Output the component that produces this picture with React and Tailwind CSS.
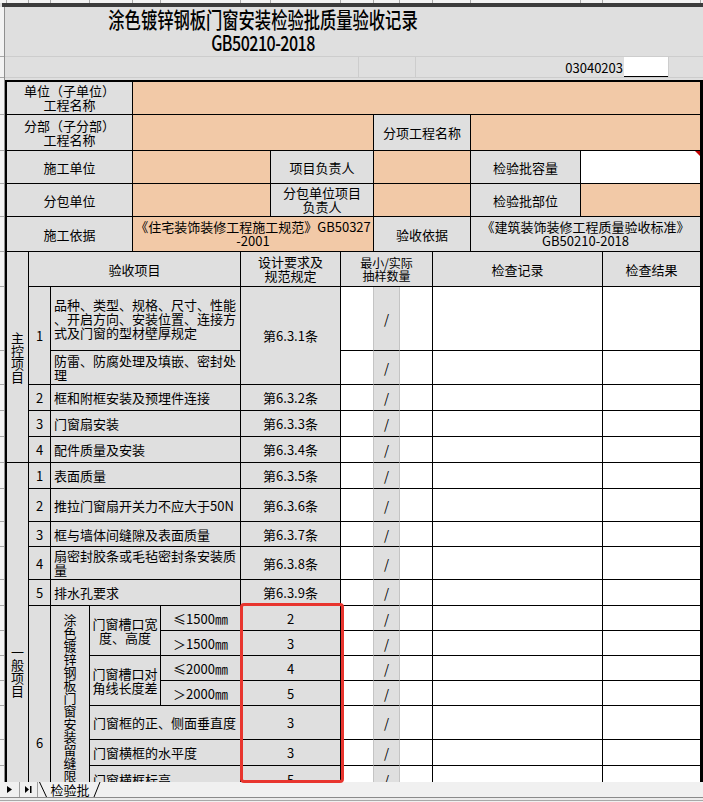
import React from 'react';

// fills used by the sheet cells
const BG = { g: 'bg-[#dfdfdf]', p: 'bg-[#f2c9a7]', w: 'bg-white' };

const H = {
  21: 'h-[21px]', 25: 'h-[25px]', 26: 'h-[26px]', 28: 'h-[28px]', 29: 'h-[29px]',
  33: 'h-[33px]', 34: 'h-[34px]', 35: 'h-[35px]', 36: 'h-[36px]', 37: 'h-[37px]',
  50: 'h-[50px]', 64: 'h-[64px]',
};

const COLS = [
  'w-[22px]', 'w-[22px]', 'w-[39px]', 'w-[43px]', 'w-[28px]', 'w-[80px]', 'w-[30px]', 'w-[70px]',
  'w-[33px]', 'w-[26px]', 'w-[33px]', 'w-[38px]', 'w-[110px]', 'w-[22px]', 'w-[98px]',
];

const cell = (t, cs = 1, rs = 1, bg = 'g', o = {}) => ({ t, cs, rs, bg, ...o });

const tail = () => [
  cell('', 1, 1, 'w', { light: true }),
  cell('/', 1, 1, 'g', { light: true }),
  cell('', 1, 1, 'w'),
  cell('', 3, 1, 'w'),
  cell('', 1, 1, 'w'),
];

const L = { left: true };

const rows = [
  [33, [cell(['单位（子单位）', '工程名称'], 4), cell('', 11, 1, 'p')]],
  [36, [cell(['分部（子分部）', '工程名称'], 4), cell('', 5, 1, 'p'), cell('分项工程名称', 3), cell('', 3, 1, 'p')]],
  [33, [cell('施工单位', 4), cell('', 3, 1, 'p'), cell('项目负责人', 2), cell('', 3, 1, 'p'), cell('检验批容量'), cell('', 2, 1, 'w', { mark: true })]],
  [33, [cell('分包单位', 4), cell('', 3, 1, 'p'), cell(['分包单位项目', '负责人'], 2), cell('', 3, 1, 'p'), cell('检验批部位'), cell('', 2, 1, 'p')]],
  [35, [cell('施工依据', 4), cell(['《住宅装饰装修工程施工规范》GB50327', '-2001'], 5, 1, 'p'), cell('验收依据', 3), cell(['《建筑装饰装修工程质量验收标准》', 'GB50210-2018'], 3)]],
  [35, [cell('主控项目', 1, 6, 'g', { vert: true }), cell('验收项目', 5), cell(['设计要求及', '规范规定'], 2), cell(['最小/实际', '抽样数量'], 3, 1, 'g', { sm: true }), cell('检查记录', 3), cell('检查结果')]],
  [64, [cell('1', 1, 2), cell(['品种、类型、规格、尺寸、性能', '、开启方向、安装位置、连接方', '式及门窗的型材壁厚规定'], 4, 1, 'g', L), cell('第6.3.1条', 2, 2), ...tail()]],
  [34, [cell(['防雷、防腐处理及填嵌、密封处', '理'], 4, 1, 'g', L), ...tail()]],
  [26, [cell('2'), cell('框和附框安装及预埋件连接', 4, 1, 'g', L), cell('第6.3.2条', 2), ...tail()]],
  [26, [cell('3'), cell('门窗扇安装', 4, 1, 'g', L), cell('第6.3.3条', 2), ...tail()]],
  [26, [cell('4'), cell('配件质量及安装', 4, 1, 'g', L), cell('第6.3.4条', 2), ...tail()]],
  [26, [cell('一般项目', 1, 15, 'g', { vert: true }), cell('1'), cell('表面质量', 4, 1, 'g', L), cell('第6.3.5条', 2), ...tail()]],
  [33, [cell('2'), cell('推拉门窗扇开关力不应大于50N', 4, 1, 'g', L), cell('第6.3.6条', 2), ...tail()]],
  [25, [cell('3'), cell('框与墙体间缝隙及表面质量', 4, 1, 'g', L), cell('第6.3.7条', 2), ...tail()]],
  [33, [cell('4'), cell(['扇密封胶条或毛毡密封条安装质', '量'], 4, 1, 'g', L), cell('第6.3.8条', 2), ...tail()]],
  [26, [cell('5'), cell('排水孔要求', 4, 1, 'g', L), cell('第6.3.9条', 2), ...tail()]],
  [25, [cell('6', 1, 10), cell('涂色镀锌钢板门窗安装留缝限值和允许偏差㎜', 1, 10, 'g', { vert: true }), cell(['门窗槽口宽', '度、高度'], 2, 2), cell('≤1500㎜'), cell('2', 2), ...tail()]],
  [25, [cell('＞1500㎜'), cell('3', 2), ...tail()]],
  [25, [cell(['门窗槽口对', '角线长度差'], 2, 2), cell('≤2000㎜'), cell('4', 2), ...tail()]],
  [25, [cell('＞2000㎜'), cell('5', 2), ...tail()]],
  [34, [cell('门窗框的正、侧面垂直度', 3, 1, 'g', L), cell('3', 2), ...tail()]],
  [26, [cell('门窗横框的水平度', 3, 1, 'g', L), cell('3', 2), ...tail()]],
  [28, [cell('门窗横框标高', 3, 1, 'g', L), cell('5', 2), ...tail()]],
  [28, [cell('门窗竖向偏离中心', 3, 1, 'g', L), cell('5', 2), ...tail()]],
  [29, [cell('双层门窗内外框间距', 3, 1, 'g', L), cell('4', 2), ...tail()]],
  [29, [cell('推拉门窗扇与框搭接宽度', 3, 1, 'g', L), cell('2', 2), ...tail()]],
];

const rowHeads = [50, 21, 37, 36, 33, 33, 35, 35, 64, 34, 26, 26, 26, 26, 33, 25, 33, 26, 25, 25, 25, 25, 34, 26, 28, 28, 29, 29];

function Cell({ c }) {
  const lines = Array.isArray(c.t) ? c.t : [c.t];
  const multi = lines.length > 1;
  return (
    <td
      colSpan={c.cs}
      rowSpan={c.rs}
      className={`p-0 border-r border-b border-b-black ${c.light ? 'border-r-[#c4c4c4]' : 'border-r-black'} ${BG[c.bg]} ${c.left ? 'text-left pl-[3px]' : 'text-center'} ${c.sm ? 'text-[12px] leading-[13px]' : multi ? 'text-[13px] leading-[14px]' : 'text-[13px] leading-[15px]'} ${c.mark ? 'relative' : ''}`}
    >
      {c.vert ? (
        <div className="mx-auto w-[13px] leading-[13px] break-all">{c.t}</div>
      ) : (
        lines.map((l, i) => (
          <div key={i} className="whitespace-nowrap">{l}</div>
        ))
      )}
      {c.mark && (
        <div className="absolute top-0 right-0 w-0 h-0 border-l-[5px] border-l-transparent border-t-[5px] border-t-[#c00000]" />
      )}
    </td>
  );
}

export default function App() {
  return (
    <div className="relative w-[703px] h-[802px] overflow-hidden flex flex-col bg-[#dfdfdf] text-black font-['Noto_Sans_CJK_SC','Noto_Sans',sans-serif]">
      {/* column header sliver */}
      <div className="flex h-[3px] bg-[#f3f3f3]">
        <div className="w-[7px] border-r border-[#a8a8a8]" />
        {COLS.map((w, i) => (
          <div key={i} className={`${w} border-r border-[#a8a8a8]`} />
        ))}
      </div>
      <div className="h-[4px] ml-[2px] bg-[#3c3c3c]" />

      <div className="flex h-[775px] overflow-hidden">
        {/* row header sliver */}
        <div className="w-[5px] shrink-0 flex flex-col bg-[#f3f3f3] border-r border-[#8f8f8f]">
          {rowHeads.map((h, i) => (
            <div key={i} className={`${H[h]} shrink-0 border-b border-[#a8a8a8]`} />
          ))}
        </div>

        <div className="w-[698px] shrink-0">
          <div className="h-[50px] border-b border-[#cdcdcd]">
            <div className="w-[516px] flex flex-col items-center pt-[4px]">
              <div className="h-[17px] text-[16.3px] leading-[17px] font-medium whitespace-nowrap scale-y-[1.3]">
                涂色镀锌钢板门窗安装检验批质量验收记录
              </div>
              <div className="mt-[7px] h-[15px] text-[16px] leading-[15px] font-medium tracking-[-0.5px] scale-y-[1.3]">
                GB50210-2018
              </div>
            </div>
          </div>

          <div className="flex h-[21px] border-b border-[#cdcdcd]">
            <div className="w-[354px] border-r border-[#cdcdcd]" />
            <div className="w-[57px] border-r border-[#cdcdcd]" />
            <div className="w-[208px] text-right pr-[1px] text-[13px] leading-[21px]">03040203</div>
            <div className="w-[44px] h-[20px] bg-white border-b border-black" />
            <div className="flex-1 border-l border-[#cdcdcd]" />
          </div>
          <div className="h-[2px]" />

          <div className="w-[698px] border-t-2 border-l-2 border-r-2 border-black">
            <table className="w-[694px] table-fixed border-separate border-spacing-0">
              <colgroup>
                {COLS.map((w, i) => (
                  <col key={i} className={w} />
                ))}
              </colgroup>
              <tbody>
                {rows.map(([h, cells], r) => (
                  <tr key={r} className={H[h]}>
                    {cells.map((c, i) => (
                      <Cell key={i} c={c} />
                    ))}
                  </tr>
                ))}
              </tbody>
            </table>
          </div>
        </div>
      </div>

      {/* sheet tabs */}
      <div className="h-[20px] bg-[#f0f0f0]">
        <div className="flex h-[15px]">
          <div className="w-[20px] border-r border-[#a0a0a0] flex items-center justify-center">
            <svg width="5" height="7" viewBox="0 0 5 7">
              <path d="M0 0L5 3.5L0 7Z" fill="#000" />
            </svg>
          </div>
          <div className="w-[18px] border-r border-[#a0a0a0] flex items-center justify-center">
            <svg width="7" height="7" viewBox="0 0 7 7">
              <path d="M0 0L4 3.5L0 7Z" fill="#000" />
              <rect x="5" y="0" width="1.5" height="7" fill="#000" />
            </svg>
          </div>
          <div className="relative w-[64px] flex items-center justify-center text-[13px] leading-[15px]">
            <svg className="absolute inset-0" width="64" height="15" viewBox="0 0 64 15">
              <line x1="1.5" y1="0" x2="8.5" y2="15" stroke="#000" strokeWidth="1" />
              <line x1="56" y1="15" x2="62" y2="0" stroke="#000" strokeWidth="1" />
            </svg>
            <span className="relative">检验批</span>
          </div>
        </div>
        <div className="h-[1px] bg-[#8a8a8a]" />
        <div className="h-[2px] bg-[#ececec]" />
        <div className="h-[1px] bg-[#a8a8a8]" />
      </div>

      {/* annotation box drawn over the sheet */}
      <div className="absolute left-[240px] top-[603px] w-[104px] h-[180px] border-[3px] border-[#e8352e] rounded-[4px]" />
    </div>
  );
}
